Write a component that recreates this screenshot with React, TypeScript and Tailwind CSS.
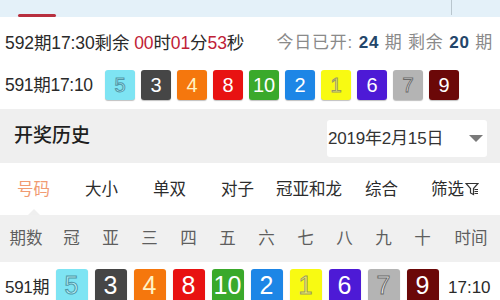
import React from 'react';

// ball colours keyed by number
const BALL: Record<number, { bg: string; text: string }> = {
  1: { bg: 'bg-[#f8fa12]', text: 'text-[#fbfb6a] [-webkit-text-stroke:1px_#9a9a60]' },
  2: { bg: 'bg-[#1d86e6]', text: 'text-white' },
  3: { bg: 'bg-[#464646]', text: 'text-white' },
  4: { bg: 'bg-[#f5770d]', text: 'text-[#fff3c4]' },
  5: { bg: 'bg-[#7ee4f3]', text: 'text-[#b8f3fb] [-webkit-text-stroke:1px_#4f98a8]' },
  6: { bg: 'bg-[#4d1ad6]', text: 'text-white' },
  7: { bg: 'bg-[#b4b4b4]', text: 'text-[#f8f8f8] [-webkit-text-stroke:1px_#6a6a6a]' },
  8: { bg: 'bg-[#e81212]', text: 'text-white' },
  9: { bg: 'bg-[#6b0808]', text: 'text-white' },
  10: { bg: 'bg-[#3aa92b]', text: 'text-white' },
};

const draw = [5, 3, 4, 8, 10, 2, 1, 6, 7, 9];

function Ball({ n, big }: { n: number; big?: boolean }) {
  const c = BALL[n];
  return (
    <div
      className={`${c.bg} ${c.text} flex items-center justify-center rounded-[3px] shadow-[0_1px_1px_rgba(0,0,0,0.25)] ${
        big ? 'w-[32px] h-[34px] text-[25px]' : 'w-[30px] h-[30px] text-[20px]'
      }`}
    >
      {n}
    </div>
  );
}

function FilterIcon() {
  return (
    <svg width="14" height="14" viewBox="0 0 14 14" fill="none" stroke="#333" strokeWidth="1.2">
      <path d="M1 1.5h12l-4.5 5v6l-3-1.5v-4.5z" />
      <path d="M9.5 7.5h3.5M9.5 9.5h3.5M9.5 11.5h3.5" />
    </svg>
  );
}

export default function App() {
  const tabs = ['号码', '大小', '单双', '对子', '冠亚和龙', '综合'];
  const heads = ['冠', '亚', '三', '四', '五', '六', '七', '八', '九', '十'];

  return (
    <div className="w-[500px] h-[300px] overflow-hidden bg-white font-['Liberation_Sans','Noto_Sans_CJK_SC',sans-serif] text-[#2a2a2a]">
      {/* top nav strip */}
      <div className="h-[17px] bg-[#e4f1f9] flex items-end">
        <div className="ml-[18px] w-[38px] h-[3px] rounded-full bg-[#b8303f]" />
        <div className="ml-auto mr-[48px] self-start w-px h-[15px] bg-[#b9c6ce]" />
      </div>

      {/* countdown row */}
      <div className="h-[52px] flex items-center justify-between pl-[5px] pr-[7px]">
        <div className="text-[17.5px] tracking-[-0.1px]">
          592期17:30剩余 <span className="text-[#c02136]">00</span>时<span className="text-[#c02136]">01</span>分
          <span className="text-[#c02136]">53</span>秒
        </div>
        <div className="text-[17px] text-[#8a8a8a] tracking-[0.8px]">
          今日已开: <span className="font-bold text-[#24466a]">24</span> 期 剩余{' '}
          <span className="font-bold text-[#24466a]">20</span> 期
        </div>
      </div>

      {/* latest draw */}
      <div className="h-[30px] mt-[1px] flex items-center pl-[5px]">
        <div className="w-[100px] text-[17.5px] tracking-[-0.3px]">591期17:10</div>
        <div className="flex gap-[6px]">
          {draw.map((n) => (
            <Ball key={n} n={n} />
          ))}
        </div>
      </div>

      {/* history header */}
      <div className="mt-[9px] h-[54px] bg-[#efefef] flex items-center justify-between pl-[14px] pr-[13px]">
        <div className="text-[19px] font-medium text-[#1f1f1f]">开奖历史</div>
        <div className="w-[160px] h-[37px] bg-white rounded-[3px] flex items-center justify-between pl-[1px] pr-[4px] mt-[5px]">
          <span className="text-[17px] text-[#333] tracking-[-0.2px]">2019年2月15日</span>
          <svg width="14" height="8" viewBox="0 0 14 8">
            <path d="M0 0h14L7 7z" fill="#7a7a7a" />
          </svg>
        </div>
      </div>

      {/* tabs */}
      <div className="relative h-[52px] flex items-center pl-[17px] text-[16.5px]">
        {tabs.map((t, i) => (
          <div
            key={t}
            className={`${i === 0 ? 'text-[#f19b72]' : 'text-[#2c2c2c]'} ${
              ['mr-[35px]', 'mr-[35px]', 'mr-[35px]', 'mr-[22px]', 'mr-[23px]', 'mr-[33px]'][i]
            }`}
          >
            {t}
          </div>
        ))}
        <div className="flex items-center gap-[1px] text-[#2c2c2c]">
          筛选
          <FilterIcon />
        </div>
        <div className="absolute left-[28px] bottom-0 w-0 h-0 border-x-[6px] border-x-transparent border-b-[6px] border-b-[#efefef]" />
      </div>

      {/* column header */}
      <div className="h-[47px] bg-[#f0f0f0] grid grid-cols-[52px_repeat(10,39px)_1fr] items-center text-[16.5px] text-[#5e5e5e]">
        <div className="text-center">期数</div>
        {heads.map((h) => (
          <div key={h} className="text-center">
            {h}
          </div>
        ))}
        <div className="text-center">时间</div>
      </div>

      {/* history row */}
      <div className="grid grid-cols-[52px_repeat(10,39px)_1fr] items-start pt-[7px]">
        <div className="pl-[5px] pt-[6px] text-[17px] tracking-[-0.3px]">591期</div>
        {draw.map((n) => (
          <div key={n} className="flex justify-center">
            <Ball n={n} big />
          </div>
        ))}
        <div className="pl-[6px] pt-[6px] text-[17px]">17:10</div>
      </div>
    </div>
  );
}
